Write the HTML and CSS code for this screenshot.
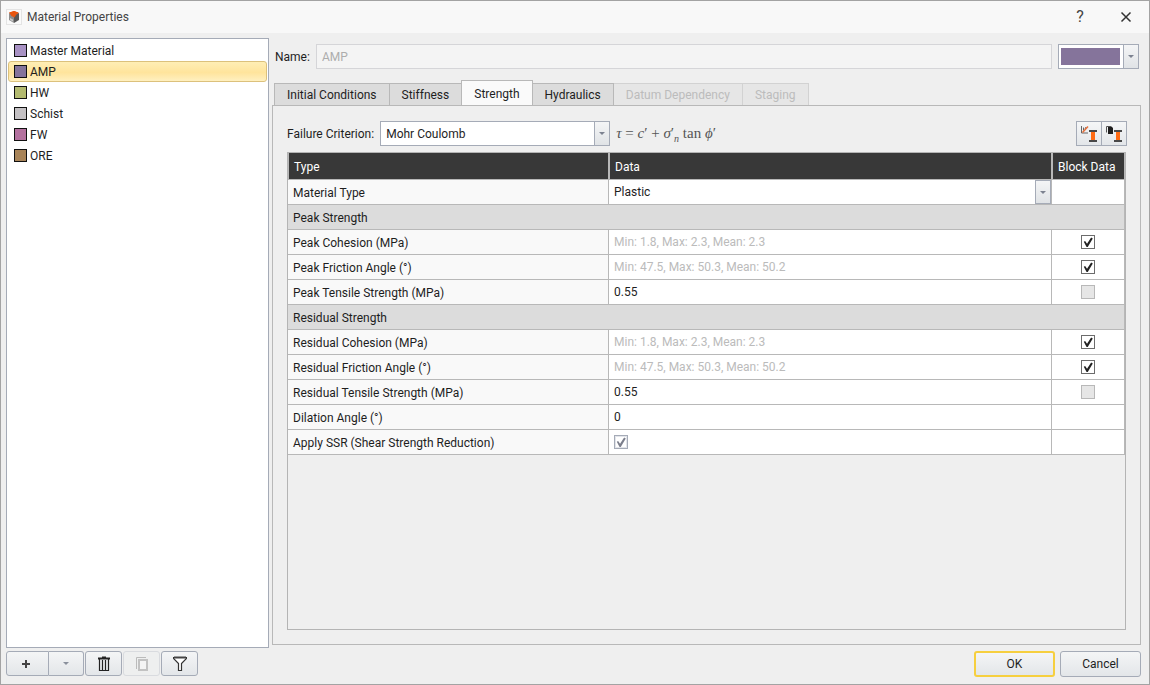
FILE: index.html
```html
<!DOCTYPE html>
<html lang="en">
<head>
<meta charset="utf-8">
<title>Material Properties</title>
<link rel="stylesheet" href="styles.css">
</head>
<body>
<div class="window">
  <header class="titlebar">
    <svg class="app-icon" width="16" height="16" viewBox="0 0 16 16" aria-hidden="true">
      <rect x=".5" y=".5" width="15" height="15" fill="#fafafa" stroke="#e4e4e4"/>
      <path d="M3 4l5-2 5 2-5 3z" fill="#e8550f"/>
      <path d="M3 4l5 2v8l-5-3z" fill="#8d8d8d"/>
      <path d="M13 4l-5 2v8l5-3z" fill="#585858"/>
      <path d="M3 3.500l5-1.500 4.500 1.500L10 6 8.500 8.500 5.500 7z" fill="#e8550f"/>
      <path d="M4 9l3 1.500v2L4 11z" fill="#c9c9c9"/>
    </svg>
    <h1 class="title">Material Properties</h1>
    <button class="caption help" type="button" aria-label="Help">?</button>
    <button class="caption" type="button" aria-label="Close">
      <svg width="12" height="12" viewBox="0 0 12 12"><path d="M1.500 1.500l9 9M10.500 1.500l-9 9" fill="none" stroke="#333" stroke-width="1.500"/></svg>
    </button>
  </header>

  <main class="content">
    <ul class="materials">
      <li class="material"><span class="swatch master"></span>Master Material</li>
      <li class="material selected"><span class="swatch amp"></span>AMP</li>
      <li class="material"><span class="swatch hw"></span>HW</li>
      <li class="material"><span class="swatch schist"></span>Schist</li>
      <li class="material"><span class="swatch fw"></span>FW</li>
      <li class="material"><span class="swatch ore"></span>ORE</li>
    </ul>

    <section class="details">
      <div class="name-row">
        <label for="name">Name:</label>
        <input class="name-input" id="name" type="text" value="AMP" disabled>
        <button class="color-picker" type="button" aria-label="Material color">
          <span class="color-well"><span class="color-fill"></span></span>
          <span class="drop"><svg width="6" height="3" viewBox="0 0 6 3"><path d="M0 0h6L3 3z" fill="#7c8290"/></svg></span>
        </button>
      </div>

      <div class="tabs" role="tablist">
        <button class="tab" role="tab" type="button">Initial Conditions</button>
        <button class="tab stiffness" role="tab" type="button">Stiffness</button>
        <button class="tab active" role="tab" type="button" aria-selected="true">Strength</button>
        <button class="tab" role="tab" type="button">Hydraulics</button>
        <button class="tab" role="tab" type="button" disabled>Datum Dependency</button>
        <button class="tab" role="tab" type="button" disabled>Staging</button>
      </div>

      <div class="panel">
        <div class="criterion-row">
          <label for="criterion">Failure Criterion:</label>
          <span class="combo criterion">
            <select id="criterion"><option>Mohr Coulomb</option></select>
            <span class="drop"><svg width="6" height="3" viewBox="0 0 6 3"><path d="M0 0h6L3 3z" fill="#7c8290"/></svg></span>
          </span>
          <span class="formula"><i>τ</i> = <i>c</i>′ + <i>σ</i>′<sub><i>n</i></sub> tan <i>ϕ</i>′</span>
          <div class="tools">
            <button class="tool" type="button" aria-label="Plot strength">
              <svg width="20" height="18" viewBox="0 0 20 18">
                <path d="M2.500 1v7H9" fill="none" stroke="#666"/>
                <path d="M4.500 2.500v3M6 4l1-2" fill="none" stroke="#666"/>
                <path d="M3.500 7.500L9 1.500" stroke="#e8703a" stroke-width="1.500"/>
                <path d="M10 5h8v2h-8zM10 15h8v2h-8z" fill="#484848"/>
                <path d="M12 7h4v8h-4z" fill="#ff6a13"/>
              </svg>
            </button>
            <button class="tool" type="button" aria-label="Copy strength">
              <svg width="20" height="18" viewBox="0 0 20 18">
                <path d="M2.500 7.500v-6h5" fill="none" stroke="#555"/>
                <path d="M4 2h4l1 1v6H4z" fill="#1e1e1e"/>
                <path d="M10 5h8v2h-8zM10 15h8v2h-8z" fill="#484848"/>
                <path d="M12 7h4v8h-4z" fill="#ff6a13"/>
              </svg>
            </button>
          </div>
        </div>

        <div class="grid-box">
          <table class="props">
            <colgroup><col class="col-type"><col><col class="col-block"></colgroup>
            <thead><tr><th scope="col">Type</th><th scope="col">Data</th><th scope="col">Block Data</th></tr></thead>
            <tbody>
              <tr>
                <th scope="row"><label for="mtype">Material Type</label></th>
                <td class="flush"><span class="combo cell-combo">
                  <select id="mtype"><option>Plastic</option></select>
                  <span class="drop"><svg width="6" height="3" viewBox="0 0 6 3"><path d="M0 0h6L3 3z" fill="#7c8290"/></svg></span>
                </span></td>
                <td></td>
              </tr>
              <tr class="group"><th colspan="3" scope="rowgroup">Peak Strength</th></tr>
              <tr>
                <th scope="row"><label for="pc">Peak Cohesion (MPa)</label></th>
                <td><input class="value" id="pc" type="text" value="Min: 1.8, Max: 2.3, Mean: 2.3" disabled></td>
                <td class="center"><input class="check" type="checkbox" checked aria-label="Peak cohesion block data"></td>
              </tr>
              <tr>
                <th scope="row"><label for="pf">Peak Friction Angle (°)</label></th>
                <td><input class="value" id="pf" type="text" value="Min: 47.5, Max: 50.3, Mean: 50.2" disabled></td>
                <td class="center"><input class="check" type="checkbox" checked aria-label="Peak friction block data"></td>
              </tr>
              <tr>
                <th scope="row"><label for="pt">Peak Tensile Strength (MPa)</label></th>
                <td><input class="value" id="pt" type="text" value="0.55"></td>
                <td class="center"><input class="check" type="checkbox" disabled aria-label="Peak tensile block data"></td>
              </tr>
              <tr class="group"><th colspan="3" scope="rowgroup">Residual Strength</th></tr>
              <tr>
                <th scope="row"><label for="rc">Residual Cohesion (MPa)</label></th>
                <td><input class="value" id="rc" type="text" value="Min: 1.8, Max: 2.3, Mean: 2.3" disabled></td>
                <td class="center"><input class="check" type="checkbox" checked aria-label="Residual cohesion block data"></td>
              </tr>
              <tr>
                <th scope="row"><label for="rf">Residual Friction Angle (°)</label></th>
                <td><input class="value" id="rf" type="text" value="Min: 47.5, Max: 50.3, Mean: 50.2" disabled></td>
                <td class="center"><input class="check" type="checkbox" checked aria-label="Residual friction block data"></td>
              </tr>
              <tr>
                <th scope="row"><label for="rt">Residual Tensile Strength (MPa)</label></th>
                <td><input class="value" id="rt" type="text" value="0.55"></td>
                <td class="center"><input class="check" type="checkbox" disabled aria-label="Residual tensile block data"></td>
              </tr>
              <tr>
                <th scope="row"><label for="da">Dilation Angle (°)</label></th>
                <td><input class="value" id="da" type="text" value="0"></td>
                <td></td>
              </tr>
              <tr>
                <th scope="row"><label for="ssr">Apply SSR (Shear Strength Reduction)</label></th>
                <td><input class="check framed" id="ssr" type="checkbox" checked></td>
                <td></td>
              </tr>
            </tbody>
          </table>
        </div>
      </div>
    </section>
  </main>

  <footer class="footer">
    <div class="split">
      <button class="btn add" type="button" aria-label="Add material">
        <svg width="8" height="8" viewBox="0 0 8 8"><path d="M4 0v8M0 4h8" stroke="#444" stroke-width="2"/></svg>
      </button>
      <button class="btn more" type="button" aria-label="More add options">
        <svg width="6" height="3" viewBox="0 0 6 3"><path d="M0 0h6L3 3z" fill="#8a909c"/></svg>
      </button>
    </div>
    <button class="btn icon-btn" type="button" aria-label="Delete">
      <svg width="14" height="16" viewBox="0 0 14 16"><path d="M1 2.500h12M5 1.500h4" stroke="#222" stroke-width="2" fill="none"/><path d="M2.500 3v11.500h9V3M5.500 4v10M8.500 4v10" stroke="#222" fill="none" stroke-width="1.200"/></svg>
    </button>
    <button class="btn icon-btn" type="button" disabled aria-label="Duplicate">
      <svg width="14" height="16" viewBox="0 0 14 16"><path d="M1.500 13V1.500H11" stroke="#bbb" fill="none"/><path d="M4 4h8v10H4z" stroke="#c2c2c2" stroke-width="2" fill="#f4f4f4"/></svg>
    </button>
    <button class="btn icon-btn" type="button" aria-label="Filter">
      <svg width="14" height="16" viewBox="0 0 14 16"><path d="M.5 1.500h13v1l-5 5v7h-3v-7l-5-5z" stroke="#333" fill="#fff" stroke-width="1.200"/><path d="M1 1.500h12" stroke="#444" stroke-width="2"/></svg>
    </button>
    <div class="actions">
      <button class="btn action primary" type="button">OK</button>
      <button class="btn action" type="button">Cancel</button>
    </div>
  </footer>
</div>
</body>
</html>
```
FILE: styles.css
```css
* { box-sizing: border-box; }

body {
  margin: 0;
  font: 12px/16px Roboto, "Open Sans", sans-serif;
  color: #1e1e1e;
}

button, input, select { font: inherit; color: inherit; margin: 0; }
button { padding: 0; }
svg { display: block; }

.window {
  display: flex;
  flex-direction: column;
  min-height: 100vh;
  border: 1px solid #a3a3a3;
  background: #efefef;
}

/* Title bar */
.titlebar {
  display: flex;
  align-items: center;
  height: 32px;
  padding: 0 0 0 5px;
  background: #f8f8f8;
}
.title { flex: 1; margin: 0 0 0 5px; font-size: 12px; font-weight: 400; color: #444; }
.caption {
  display: flex;
  align-items: center;
  justify-content: center;
  width: 46px;
  height: 32px;
  border: 0;
  background: none;
}
.help { font-size: 16px; color: #444; }

/* Main area */
.content {
  flex: 1;
  display: flex;
  gap: 3px;
  padding: 5px 8px 3px 5px;
}
.materials {
  width: 263px;
  margin: 0 0 -3px;
  padding: 1px;
  list-style: none;
  background: #fff;
  border: 1px solid #a5abb7;
}
.material {
  display: flex;
  align-items: center;
  gap: 3px;
  height: 21px;
  padding: 0 5px;
  border: 1px solid transparent;
}
.material.selected {
  border-color: #dcc17c;
  border-radius: 3px;
  background: linear-gradient(#ffeeb5, #ffe49c 55%, #fff0c0);
}
.swatch { width: 13px; height: 13px; border: 1px solid #111; }
.master { background: #a892c4; }
.amp { background: #85749b; }
.hw { background: #b3ba70; }
.schist { background: #c4c1c4; }
.fw { background: #b3719f; }
.ore { background: #a88459; }

.details { flex: 1; display: flex; flex-direction: column; min-width: 0; }
.name-row {
  display: flex;
  align-items: center;
  gap: 6px;
  margin-top: 6px;
  padding: 0 2px 0 3px;
}
.name-input {
  flex: 1;
  min-width: 0;
  height: 25px;
  padding: 0 5px;
  border: 1px solid #d5d5d8;
  background: #f4f4f4;
  color: #adadad;
}
.color-picker {
  display: flex;
  width: 81px;
  height: 25px;
  border: 1px solid #a5abb7;
  background: #fff;
}
.color-well { flex: 1; display: flex; align-self: stretch; padding: 3px 3px 3px 2px; }
.color-fill { flex: 1; background: #85749b; }
.drop {
  display: flex;
  align-items: center;
  justify-content: center;
  align-self: stretch;
  width: 15px;
  border-left: 1px solid #a5abb7;
  background: linear-gradient(#f4f5f6, #e0e3e6);
}

.tabs { display: flex; align-items: flex-end; height: 26px; margin: 11px 0 -1px 2px; }
.tab {
  height: 23px;
  padding: 0 12px;
  border: 1px solid #b8b8b8;
  border-left-width: 0;
  background: #dcdcdc;
}
.tab:first-child { border-left-width: 1px; }
.tab.active {
  height: 26px;
  padding-top: 2px;
  border-left-width: 1px;
  border-bottom-color: #fafafa;
  background: #fafafa;
}
.stiffness { border-right-width: 0; }
.tab:disabled { color: #bcbcbc; background: #e6e6e6; border-color: #d2d2d2; border-bottom-color: #b8b8b8; }

.panel {
  flex: 1;
  display: flex;
  flex-direction: column;
  gap: 6px;
  padding: 15px 14px 14px;
  border: 1px solid #b8b8b8;
}
.criterion-row { display: flex; align-items: center; gap: 6px; }
.combo { display: flex; align-items: stretch; position: relative; background: #fff; }
.combo select {
  width: 100%;
  padding: 0 20px 0 5px;
  border: 0;
  border-radius: 0;
  background: transparent;
  appearance: none;
}
.combo .drop { position: absolute; top: 0; right: 0; bottom: 0; pointer-events: none; }
.criterion { width: 230px; height: 25px; border: 1px solid #a5abb7; }
.formula { font: 15px/16px "Liberation Serif", serif; color: #555; }
.formula sub { font-size: 10px; line-height: 8px; }
.tools { display: flex; margin-left: auto; border: 1px solid #a5abb7; margin-right: -1px; }
.tool {
  display: flex;
  align-items: center;
  justify-content: center;
  width: 24px;
  height: 23px;
  border: 0;
  background: linear-gradient(#f5f6f7, #e3e6e9);
}
.tool + .tool { width: 25px; border-left: 1px solid #a5abb7; }

/* Property grid */
.grid-box { flex: 1; border: 1px solid #b4b4b4; }
.props { width: 100%; table-layout: fixed; border-collapse: separate; border-spacing: 0; }
.col-type { width: 321px; }
.col-block { width: 73px; }
.props th, .props td {
  height: 25px;
  padding: 0 5px;
  border: solid #b8b8b8;
  border-width: 0 1px 1px 0;
  text-align: left;
  font-weight: 400;
  background: #fff;
}
.props thead th {
  height: 27px;
  padding: 2px 0 0 5px;
  border-left-width: 1px;
  background: #383838;
  color: #fff;
}
.props tbody th { padding-top: 2px; background: #f9f9f9; }
.props .group th { background: #dcdcdc; }
.props .flush { padding: 0; }
.props .center { text-align: center; }
.cell-combo { height: 24px; }
.cell-combo .drop { border: 1px solid #a5abb7; width: 16px; }
.value { display: block; width: 100%; height: 22px; padding: 0; border: 0; background: none; }
.value:disabled { color: #bbb; }

.check {
  appearance: none;
  display: block;
  width: 14px;
  height: 14px;
  border: 1px solid #6c6c6c;
  background: #fff;
}
.center .check { margin: 0 auto; }
.check:checked::before {
  content: "";
  display: block;
  width: 12px;
  height: 12px;
  background: #222;
  clip-path: polygon(15% 48%, 26% 42%, 42% 65%, 76% 12%, 90% 20%, 48% 92%, 38% 92%);
}
.check:disabled { border-color: #b8b8b8; background: #e6e6e6; }
.framed { border-color: #a5abb7; box-shadow: inset 0 0 0 1px #e3e5ea; }
.framed:checked::before { background: #7c7f8c; }

/* Footer */
.footer { display: flex; align-items: flex-start; gap: 1px; padding: 3px 8px 7px 5px; }
.split { display: flex; }
.btn {
  display: flex;
  align-items: center;
  justify-content: center;
  height: 25px;
  border: 1px solid #a5abb7;
  border-radius: 3px;
  background: linear-gradient(#f4f5f6, #e3e6e9);
}
.btn:disabled { border-color: #d9dbdf; background: #eeefef; }
.add { width: 43px; padding-right: 4px; border-radius: 3px 0 0 3px; }
.more { width: 35px; border-left: 0; border-radius: 0 3px 3px 0; }
.icon-btn { width: 37px; }
.actions { display: flex; gap: 5px; margin-left: auto; }
.action { width: 81px; height: 26px; }
.primary { border: 2px solid #f6cf3f; }
```
